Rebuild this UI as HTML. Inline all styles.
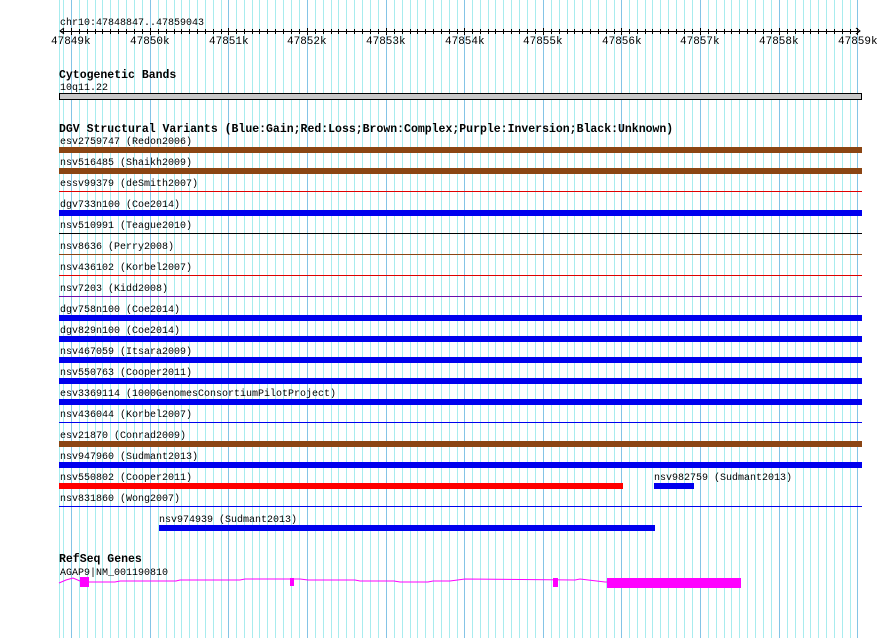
<!DOCTYPE html>
<html><head><meta charset="utf-8"><style>
html,body{margin:0;padding:0;background:#fff;width:890px;height:638px;overflow:hidden}
svg text{font-family:"Liberation Mono",monospace;font-size:10px;fill:#000}
svg text.b{font-weight:bold;font-size:11.5px}
svg text.r{font-size:11px}
svg rect{shape-rendering:crispEdges}
</style></head><body>
<svg width="890" height="638" viewBox="0 0 890 638" xmlns="http://www.w3.org/2000/svg">
<defs>
<g id="mn" fill="#a8ecee">
<rect x="8" y="0" width="1" height="638"/><rect x="16" y="0" width="1" height="638"/><rect x="24" y="0" width="1" height="638"/><rect x="31" y="0" width="1" height="638"/><rect x="39" y="0" width="1" height="638"/><rect x="47" y="0" width="1" height="638"/><rect x="55" y="0" width="1" height="638"/><rect x="63" y="0" width="1" height="638"/><rect x="71" y="0" width="1" height="638"/>
</g>
<g id="tkg" fill="#000">
<rect x="8" y="29" width="1" height="5"/><rect x="16" y="29" width="1" height="5"/><rect x="24" y="29" width="1" height="5"/><rect x="31" y="29" width="1" height="5"/><rect x="39" y="29" width="1" height="5"/><rect x="47" y="29" width="1" height="5"/><rect x="55" y="29" width="1" height="5"/><rect x="63" y="29" width="1" height="5"/><rect x="71" y="29" width="1" height="5"/>
</g>
</defs>
<rect x="59" y="0" width="1" height="638" fill="#a8ecee"/>
<rect x="63" y="0" width="1" height="638" fill="#a8ecee"/>
<use href="#mn" x="71"/><use href="#mn" x="150"/><use href="#mn" x="228"/><use href="#mn" x="307"/><use href="#mn" x="386"/><use href="#mn" x="464"/><use href="#mn" x="543"/><use href="#mn" x="621"/><use href="#mn" x="700"/><use href="#mn" x="779"/>
<g fill="#84c4e6">
<rect x="71" y="0" width="1" height="638"/><rect x="150" y="0" width="1" height="638"/><rect x="228" y="0" width="1" height="638"/><rect x="307" y="0" width="1" height="638"/><rect x="386" y="0" width="1" height="638"/><rect x="464" y="0" width="1" height="638"/><rect x="543" y="0" width="1" height="638"/><rect x="621" y="0" width="1" height="638"/><rect x="700" y="0" width="1" height="638"/><rect x="779" y="0" width="1" height="638"/><rect x="857" y="0" width="1" height="638"/>
</g>
<!-- ruler -->
<text x="60" y="25">chr10:47848847..47859043</text>
<rect x="60" y="31" width="800" height="1" fill="#000"/>
<path d="M64 28 L60 31 L64 34 M856 28 L860 31 L856 34" stroke="#000" fill="none"/>
<g fill="#000">
<rect x="71" y="28" width="1" height="7"/><rect x="150" y="28" width="1" height="7"/><rect x="228" y="28" width="1" height="7"/><rect x="307" y="28" width="1" height="7"/><rect x="386" y="28" width="1" height="7"/><rect x="464" y="28" width="1" height="7"/><rect x="543" y="28" width="1" height="7"/><rect x="621" y="28" width="1" height="7"/><rect x="700" y="28" width="1" height="7"/><rect x="779" y="28" width="1" height="7"/><rect x="857" y="28" width="1" height="7"/>
</g>
<rect x="63" y="29" width="1" height="5" fill="#000"/>
<use href="#tkg" x="71"/><use href="#tkg" x="150"/><use href="#tkg" x="228"/><use href="#tkg" x="307"/><use href="#tkg" x="386"/><use href="#tkg" x="464"/><use href="#tkg" x="543"/><use href="#tkg" x="621"/><use href="#tkg" x="700"/><use href="#tkg" x="779"/>
<text class="r" x="51" y="44">47849k</text><text class="r" x="130" y="44">47850k</text><text class="r" x="209" y="44">47851k</text><text class="r" x="287" y="44">47852k</text><text class="r" x="366" y="44">47853k</text><text class="r" x="445" y="44">47854k</text><text class="r" x="523" y="44">47855k</text><text class="r" x="602" y="44">47856k</text><text class="r" x="680" y="44">47857k</text><text class="r" x="759" y="44">47858k</text><text class="r" x="838" y="44">47859k</text>
<!-- cytoband -->
<text class="b" x="59" y="78">Cytogenetic Bands</text>
<text x="60" y="90">10q11.22</text>
<rect x="59.5" y="93.5" width="802" height="6" fill="#c8c8c8" stroke="#000" style="shape-rendering:auto"/>
<!-- DGV -->
<text class="b" x="59" y="132">DGV Structural Variants (Blue:Gain;Red:Loss;Brown:Complex;Purple:Inversion;Black:Unknown)</text>
<text x="60" y="144">esv2759747 (Redon2006)</text><rect x="59" y="147" width="803" height="6" fill="#8b4513"/>
<text x="60" y="165">nsv516485 (Shaikh2009)</text><rect x="59" y="168" width="803" height="6" fill="#8b4513"/>
<text x="60" y="186">essv99379 (deSmith2007)</text><rect x="59" y="191" width="803" height="1" fill="#e00000"/>
<text x="60" y="207">dgv733n100 (Coe2014)</text><rect x="59" y="210" width="803" height="6" fill="#0000ee"/>
<text x="60" y="228">nsv510991 (Teague2010)</text><rect x="59" y="233" width="803" height="1" fill="#000"/>
<text x="60" y="249">nsv8636 (Perry2008)</text><rect x="59" y="254" width="803" height="1" fill="#8b4513"/>
<text x="60" y="270">nsv436102 (Korbel2007)</text><rect x="59" y="275" width="803" height="1" fill="#e00000"/>
<text x="60" y="291">nsv7203 (Kidd2008)</text><rect x="59" y="296" width="803" height="1" fill="#6a0dad"/>
<text x="60" y="312">dgv758n100 (Coe2014)</text><rect x="59" y="315" width="803" height="6" fill="#0000ee"/>
<text x="60" y="333">dgv829n100 (Coe2014)</text><rect x="59" y="336" width="803" height="6" fill="#0000ee"/>
<text x="60" y="354">nsv467059 (Itsara2009)</text><rect x="59" y="357" width="803" height="6" fill="#0000ee"/>
<text x="60" y="375">nsv550763 (Cooper2011)</text><rect x="59" y="378" width="803" height="6" fill="#0000ee"/>
<text x="60" y="396">esv3369114 (1000GenomesConsortiumPilotProject)</text><rect x="59" y="399" width="803" height="6" fill="#0000ee"/>
<text x="60" y="417">nsv436044 (Korbel2007)</text><rect x="59" y="422" width="803" height="1" fill="#0000ee"/>
<text x="60" y="438">esv21870 (Conrad2009)</text><rect x="59" y="441" width="803" height="6" fill="#8b4513"/>
<text x="60" y="459">nsv947960 (Sudmant2013)</text><rect x="59" y="462" width="803" height="6" fill="#0000ee"/>
<text x="60" y="480">nsv550802 (Cooper2011)</text><rect x="59" y="483" width="564" height="6" fill="#ff0000"/>
<text x="654" y="480">nsv982759 (Sudmant2013)</text><rect x="654" y="483" width="40" height="6" fill="#0000ee"/>
<text x="60" y="501">nsv831860 (Wong2007)</text><rect x="59" y="506" width="803" height="1" fill="#0000ee"/>
<text x="159" y="522">nsv974939 (Sudmant2013)</text><rect x="159" y="525" width="496" height="6" fill="#0000ee"/>
<!-- RefSeq -->
<text class="b" x="59" y="562">RefSeq Genes</text>
<text x="60" y="575">AGAP9|NM_001190810</text>
<polyline fill="none" stroke="#ff00ff" stroke-width="1" points="59,583 66,580 73,578 80,581 89,582 115,582 120,581 176,581 180,580 240,580 245,579 300,579 308,580 355,580 360,581 394,581 400,582 428,582 433,581 450,581 465,579 575,580 580,579 605,582 607,582"/>
<rect x="80" y="577" width="9" height="10" fill="#ff00ff"/>
<rect x="290" y="578" width="4" height="8" fill="#ff00ff"/>
<rect x="553" y="578" width="5" height="9" fill="#ff00ff"/>
<rect x="607" y="578" width="134" height="10" fill="#ff00ff"/>
</svg>
</body></html>
